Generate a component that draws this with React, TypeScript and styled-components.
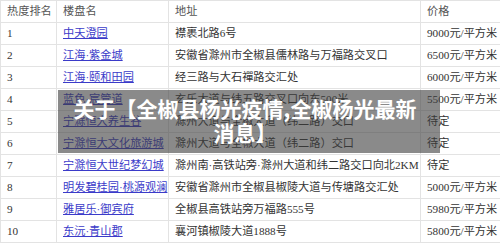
import React from "react";
import styled, { createGlobalStyle } from "styled-components";

const GlobalStyle = createGlobalStyle`
  html, body {
    margin: 0;
    padding: 0;
    background: #fff;
    overflow: hidden;
  }
`;

const Wrapper = styled.div`
  position: relative;
  width: 500px;
  height: 245px;
  overflow: hidden;
`;

const Table = styled.table`
  border-collapse: collapse;
  table-layout: fixed;
  width: 512px;
  font-family: "Liberation Serif", "Noto Sans CJK SC", serif;
  font-size: 11.2px;
  color: #333;
`;

const Cell = styled.td<{ $head?: boolean }>`
  height: 21px;
  padding: 0 0 0 6px;
  border: 1px solid #e3e3e3;
  white-space: nowrap;
  overflow: hidden;
  color: ${(p) => (p.$head ? "#555" : "#333")};
  line-height: 21px;
`;

const Link = styled.a`
  color: #3b3bc9;
  text-decoration: underline;
`;

const Overlay = styled.div`
  position: absolute;
  left: 58px;
  top: 90px;
  width: 382px;
  height: 63px;
  box-sizing: border-box;
  padding: 6px 16px 0 8px;
  background: rgba(60, 60, 60, 0.6);
  color: #fff;
  font-family: "Noto Sans CJK SC", sans-serif;
  font-weight: 700;
  font-size: 21px;
  line-height: 24px;
  text-align: center;
`;

const rows = [
  ["1", "中天澄园", "襟裹北路6号", "9000元/平方米"],
  ["2", "江海·紫金城", "安徽省滁州市全椒县儒林路与万福路交叉口", "6500元/平方米"],
  ["3", "江海·颐和田园", "经三路与大石禪路交汇处", "6000元/平方米"],
  ["4", "蓝色·宸管道", "玄乐大道与纬五路交叉口向东500米", "5500元/平方米"],
  ["5", "宁滁恒大养生谷", "滁州大道与全椒大道（纬二路）交口", "待定"],
  ["6", "宁滁恒大文化旅游城", "滁州大道与全椒大道（纬二路）交口", "待定"],
  ["7", "宁滁恒大世纪梦幻城", "滁州南·高铁站旁·滁州大道和纬二路交口向北2KM", "待定"],
  ["8", "明发碧桂园·桃源观澜", "安徽省滁州市全椒县椒陵大道与传塘路交汇处", "5000元/平方米"],
  ["9", "雅居乐·御宾府", "全椒县高铁站旁万福路555号", "5980元/平方米"],
  ["10", "东沅·青山郡", "襄河镇椒陵大道1888号", "5800元/平方米"],
];

export default function App() {
  return (
    <Wrapper>
      <GlobalStyle />
      <Table>
        <colgroup>
          <col style={{ width: 56 }} />
          <col style={{ width: 112 }} />
          <col style={{ width: 252 }} />
          <col style={{ width: 92 }} />
        </colgroup>
        <tbody>
          <tr>
            <Cell $head>热度排名</Cell>
            <Cell $head>楼盘名</Cell>
            <Cell $head>地址</Cell>
            <Cell $head>价格</Cell>
          </tr>
          {rows.map((r) => (
            <tr key={r[0]}>
              <Cell>{r[0]}</Cell>
              <Cell>
                <Link href="#">{r[1]}</Link>
              </Cell>
              <Cell>{r[2]}</Cell>
              <Cell>{r[3]}</Cell>
            </tr>
          ))}
        </tbody>
      </Table>
      <Overlay>关于【全椒县杨光疫情,全椒杨光最新消息】</Overlay>
    </Wrapper>
  );
}
